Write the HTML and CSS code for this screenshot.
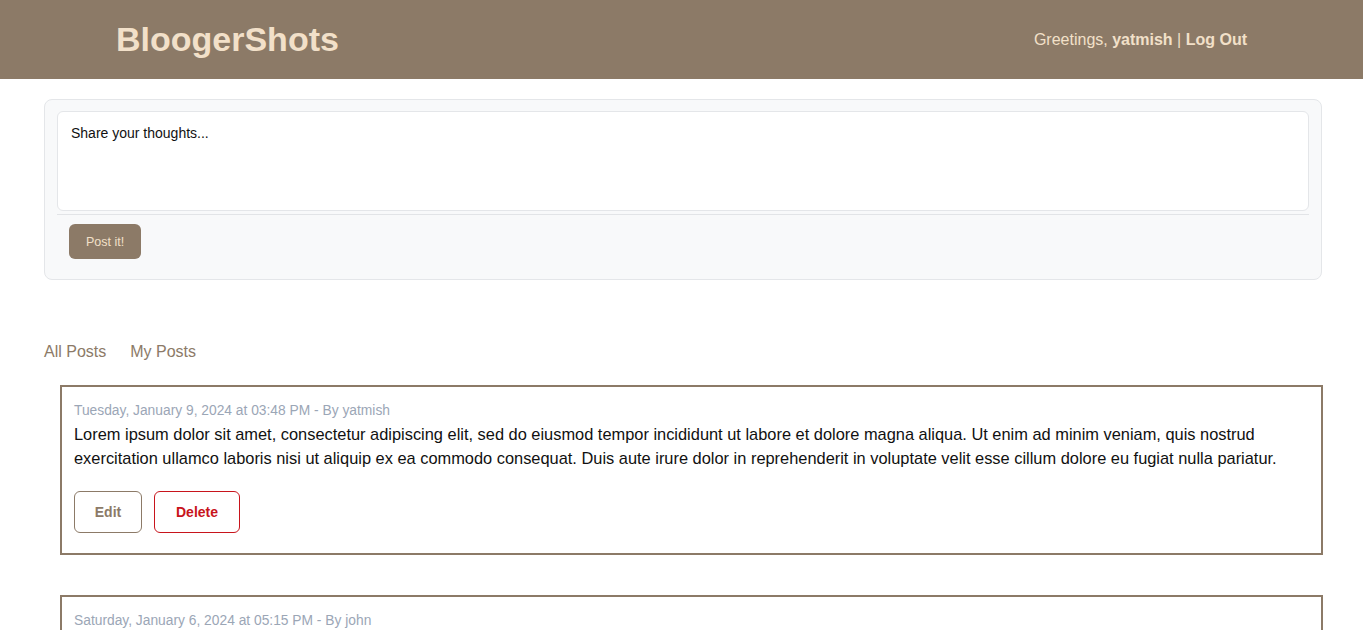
FILE: index.html
```html
<!DOCTYPE html>
<html lang="en">
<head>
<meta charset="utf-8">
<title>BloogerShots</title>
<link rel="stylesheet" href="styles.css">
</head>
<body>
<header class="topbar">
  <div class="brand">BloogerShots</div>
  <div class="user">Greetings, <b>yatmish</b> | <a class="logout" href="#">Log Out</a></div>
</header>
<main class="container">
  <form class="composer">
    <textarea class="composer-input" placeholder="Share your thoughts..."></textarea>
    <hr class="composer-rule">
    <button type="button" class="btn-post">Post it!</button>
  </form>
  <nav class="tabs">
    <a class="tab" href="#">All Posts</a>
    <a class="tab" href="#">My Posts</a>
  </nav>
  <section class="posts">
    <article class="post">
      <div class="post-meta">Tuesday, January 9, 2024 at 03:48 PM - By yatmish</div>
      <p class="post-body">Lorem ipsum dolor sit amet, consectetur adipiscing elit, sed do eiusmod tempor incididunt ut labore et dolore magna aliqua. Ut enim ad minim veniam, quis nostrud exercitation ullamco laboris nisi ut aliquip ex ea commodo consequat. Duis aute irure dolor in reprehenderit in voluptate velit esse cillum dolore eu fugiat nulla pariatur.</p>
      <div class="post-actions">
        <button type="button" class="btn-edit">Edit</button>
        <button type="button" class="btn-delete">Delete</button>
      </div>
    </article>
    <article class="post">
      <div class="post-meta">Saturday, January 6, 2024 at 05:15 PM - By john</div>
      <p class="post-body">Lorem ipsum dolor sit amet, consectetur adipiscing elit, sed do eiusmod tempor incididunt ut labore et dolore magna aliqua.</p>
      <div class="post-actions"></div>
    </article>
  </section>
</main>
</body>
</html>
```

FILE: styles.css
```css
* { box-sizing: border-box; }
html, body { margin: 0; padding: 0; }
body {
  font-family: "Liberation Sans", Arial, sans-serif;
  color: #111;
  background: #fff;
  overflow: hidden;
}
.topbar {
  height: 79px;
  background: #8c7a67;
  display: flex;
  align-items: center;
  justify-content: space-between;
  padding: 0 116px;
}
.brand {
  font-size: 34px;
  font-weight: 700;
  color: #f2e0c9;
  letter-spacing: 0;
}
.user {
  font-size: 16px;
  color: #f2e0c9;
}
.user b { font-weight: 700; }
.logout { color: #f2e0c9; font-weight: 700; text-decoration: none; }

.container {
  padding: 20px 41px 0 44px;
}
.composer {
  background: #f8f9fa;
  border: 1px solid #e4e6e9;
  border-radius: 8px;
  padding: 11px 12px 20px 12px;
}
.composer-input {
  display: block;
  width: 100%;
  height: 100px;
  border: 1px solid #e4e6e9;
  border-radius: 6px;
  background: #fff;
  padding: 13px 13px;
  font-family: inherit;
  font-size: 14px;
  resize: none;
  outline: none;
}
.composer-input::placeholder { color: #111; opacity: 1; }
.composer-rule {
  border: 0;
  border-top: 1px solid #e2e4e7;
  margin: 3px 0 9px 0;
}
.btn-post {
  margin-left: 12px;
  height: 35px;
  padding: 0 17px;
  border: 0;
  border-radius: 6px;
  background: #8c7a67;
  color: #f2e0c9;
  font-family: inherit;
  font-size: 12.5px;
}
.tabs {
  display: flex;
  gap: 24px;
  margin-top: 62px;
  line-height: 20px;
}
.tab {
  font-size: 16px;
  color: #8c7a67;
  text-decoration: none;
}
.posts {
  margin: 23px -1px 0 16px;
  display: flex;
  flex-direction: column;
  gap: 40px;
}
.post {
  border: 2px solid #8c7a67;
  padding: 14px 12px 20px 12px;
}
.post-meta {
  font-size: 13.8px;
  line-height: 20px;
  color: #9ba6b6;
}
.post-body {
  margin: 1px 0 0 0;
  font-size: 16.4px;
  line-height: 24px;
  color: #111;
}
.post-actions {
  display: flex;
  gap: 12px;
  margin-top: 21px;
}
.btn-edit, .btn-delete {
  height: 42px;
  background: #fff;
  border-radius: 6px;
  font-family: inherit;
  font-size: 14px;
  font-weight: 700;
}
.btn-edit {
  width: 68px;
  border: 1px solid #8c7a67;
  color: #8c7a67;
}
.btn-delete {
  width: 86px;
  border: 1px solid #c8141c;
  color: #c8141c;
}
```
